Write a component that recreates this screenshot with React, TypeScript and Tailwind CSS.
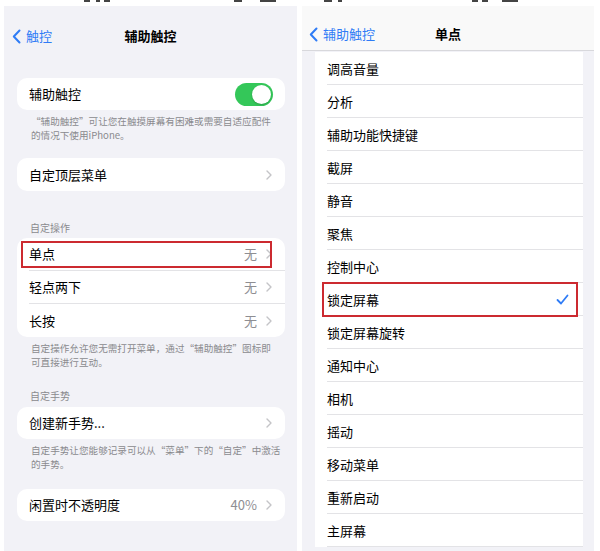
import React from "react";

const font = { fontFamily: '"Noto Sans CJK SC", "Noto Sans", sans-serif' };

function Chevron() {
  return (
    <svg width="6" height="10" viewBox="0 0 6 10" className="shrink-0">
      <path d="M1 1l4 4-4 4" fill="none" stroke="#c4c4c7" strokeWidth="1.4" strokeLinecap="round" strokeLinejoin="round" />
    </svg>
  );
}

function BackChevron() {
  return (
    <svg width="9" height="15" viewBox="0 0 9 15" className="shrink-0">
      <path d="M7.5 1.5L1.8 7.5l5.7 6" fill="none" stroke="#2f7cf6" strokeWidth="2" strokeLinecap="round" strokeLinejoin="round" />
    </svg>
  );
}

function Row({ label, value, last }: { label: string; value?: string; last?: boolean }) {
  return (
    <div className="h-[33px] flex items-stretch pl-[12px]">
      <div className={`flex-1 flex items-center pr-[13px] ${last ? "" : "border-b border-[#e3e3e6]"}`}>
        <span className="flex-1 text-[13px] text-black">{label}</span>
        {value && <span className="text-[13px] text-[#8e8e92] mr-[9px]">{value}</span>}
        <Chevron />
      </div>
    </div>
  );
}

function StatusBits({ bits }: { bits: [number, number][] }) {
  return (
    <div className="h-[6px] bg-white flex items-start">
      {bits.map(([ml, w], i) => (
        <div key={i} style={{ marginLeft: ml, width: w }} className="h-[2px] bg-[#444]" />
      ))}
    </div>
  );
}

function Note({ lines }: { lines: [string, string] }) {
  return (
    <div className="mt-[4px] pl-[27px] whitespace-nowrap text-[9.6px] leading-[14px] text-[#8a8a8e]">
      <div>{lines[0]}</div>
      <div>{lines[1]}</div>
    </div>
  );
}

function LeftPanel() {
  return (
    <div className="w-[293px] flex flex-col">
      <StatusBits bits={[[80, 6], [6, 4], [4, 6], [124, 8], [18, 16]]} />
      <div className="flex-1 bg-[#f2f2f7] flex flex-col overflow-hidden">
        <div className="h-[58px] pt-[2px] flex items-center relative">
          <div className="flex items-center pl-[8px] gap-[5px]">
            <BackChevron />
            <span className="text-[13px] text-[#2f7cf6]">触控</span>
          </div>
          <div className="absolute inset-0 pt-[2px] flex items-center justify-center pointer-events-none">
            <span className="text-[13px] font-semibold text-black">辅助触控</span>
          </div>
        </div>

        <div className="mt-[14px] ml-[13px] mr-[12px] h-[32px] bg-white rounded-[10px] flex items-center pl-[12px] pr-[12px]">
          <span className="flex-1 text-[13px] text-black">辅助触控</span>
          <div className="w-[38px] h-[23px] rounded-full bg-[#34c759] flex items-center justify-end pr-[2px]">
            <div className="w-[19px] h-[19px] rounded-full bg-white shadow-[0_1px_2px_rgba(0,0,0,0.2)]" />
          </div>
        </div>
        <Note lines={["“辅助触控”可让您在触摸屏幕有困难或需要自适应配件", "的情况下使用iPhone。"]} />

        <div className="mt-[16px] ml-[13px] mr-[12px] h-[33px] bg-white rounded-[10px] flex items-center pl-[12px] pr-[13px]">
          <span className="flex-1 text-[13px] text-black">自定顶层菜单</span>
          <Chevron />
        </div>

        <div className="mt-[31px] px-[26px] text-[10px] leading-[12px] text-[#8a8a8e]">自定操作</div>
        <div className="mt-[4px] ml-[13px] mr-[12px] bg-white rounded-[10px] relative">
          <Row label="单点" value="无" />
          <Row label="轻点两下" value="无" />
          <Row label="长按" value="无" last />
          <div className="absolute left-[4px] top-[3px] w-[251px] h-[27px] border-2 border-[#cc2a30] pointer-events-none" />
        </div>
        <Note lines={["自定操作允许您无需打开菜单，通过“辅助触控”图标即", "可直接进行互动。"]} />

        <div className="mt-[21px] px-[26px] text-[10px] leading-[12px] text-[#8a8a8e]">自定手势</div>
        <div className="mt-[5px] ml-[13px] mr-[12px] h-[32px] bg-white rounded-[10px] flex items-center pl-[12px] pr-[13px]">
          <span className="flex-1 text-[13px] text-black">创建新手势...</span>
          <Chevron />
        </div>
        <Note lines={["自定手势让您能够记录可以从“菜单”下的“自定”中激活", "的手势。"]} />

        <div className="mt-[18px] ml-[13px] mr-[12px] h-[32px] bg-white rounded-[10px] flex items-center pl-[12px] pr-[13px]">
          <span className="flex-1 text-[13px] text-black">闲置时不透明度</span>
          <span className="text-[13px] text-[#8e8e92] mr-[9px]">40%</span>
          <Chevron />
        </div>
      </div>
    </div>
  );
}

const items = [
  "调高音量",
  "分析",
  "辅助功能快捷键",
  "截屏",
  "静音",
  "聚焦",
  "控制中心",
  "锁定屏幕",
  "锁定屏幕旋转",
  "通知中心",
  "相机",
  "摇动",
  "移动菜单",
  "重新启动",
  "主屏幕",
];

function RightPanel() {
  return (
    <div className="w-[292px] flex flex-col">
      <StatusBits bits={[[22, 8], [6, 4], [130, 6], [4, 6], [14, 16]]} />
      <div className="flex-1 bg-[#f2f2f7] flex flex-col overflow-hidden">
        <div className="h-[45px] bg-[#f9f9f9] border-b border-[#d8d8dc] flex items-center relative shrink-0">
          <div className="flex items-center pl-[7px] gap-[5px] pt-[12px]">
            <BackChevron />
            <span className="text-[13px] text-[#2f7cf6]">辅助触控</span>
          </div>
          <div className="absolute inset-0 flex items-center justify-center pt-[12px] pointer-events-none">
            <span className="text-[13px] font-semibold text-black">单点</span>
          </div>
        </div>
        <div className="mt-[1px] ml-[13px] mr-[11px] bg-white flex flex-col">
          {items.map((it) => (
            <div key={it} className="h-[33px] pl-[12px] flex items-stretch relative">
              <div className="flex-1 flex items-center border-b border-[#e3e3e6] pr-[14px] pt-[1px]">
                <span className="flex-1 text-[13px] text-black">{it}</span>
                {it === "锁定屏幕" && (
                  <svg width="13" height="11" viewBox="0 0 13 11">
                    <path d="M1.5 6l3.5 3.5L11.5 1.5" fill="none" stroke="#2f7cf6" strokeWidth="1.8" strokeLinecap="round" strokeLinejoin="round" />
                  </svg>
                )}
              </div>
              {it === "锁定屏幕" && (
                <div className="absolute left-[7px] top-[-1px] w-[256px] h-[35px] border-2 border-[#cc2a30] pointer-events-none" />
              )}
            </div>
          ))}
        </div>
      </div>
    </div>
  );
}

export default function App() {
  return (
    <div className="w-[600px] h-[551px] bg-white flex pl-[4px] gap-[5px] overflow-hidden" style={font}>
      <LeftPanel />
      <RightPanel />
    </div>
  );
}
